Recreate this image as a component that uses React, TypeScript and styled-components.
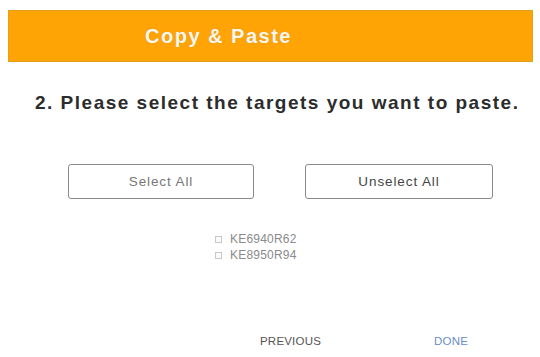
import React from "react";
import styled, { createGlobalStyle } from "styled-components";

const Global = createGlobalStyle`
  html, body { margin: 0; padding: 0; background: #ffffff; }
  body { font-family: "Liberation Sans", Arial, sans-serif; }
`;

const Page = styled.div`
  width: 540px;
  height: 357px;
  display: flex;
  flex-direction: column;
  background: #fff;
  overflow: hidden;
`;

const HeaderBar = styled.div`
  margin: 10px 7px 0 8px;
  height: 52px;
  box-sizing: border-box;
  background: #ffa404;
  border: 1px solid #e4a21c;
  display: flex;
  align-items: center;
  padding-left: 136px;
`;

const HeaderTitle = styled.span`
  color: #fbf6e8;
  font-weight: bold;
  font-size: 20px;
  letter-spacing: 1.5px;
  text-shadow: 0 0 1px #b9935a;
`;

const Instruction = styled.div`
  margin-top: 30px;
  padding-left: 35px;
  font-weight: bold;
  font-size: 19px;
  letter-spacing: 1.5px;
  color: #2c2c2c;
  line-height: 22px;
  white-space: nowrap;
`;

const ButtonRow = styled.div`
  margin-top: 50px;
  display: flex;
  gap: 51px;
  padding-left: 68px;
`;

const ActionButton = styled.button<{ $width: number; $dark?: boolean }>`
  width: ${(p) => p.$width}px;
  height: 35px;
  box-sizing: border-box;
  background: #fff;
  border: 1.5px solid #8a8a8a;
  border-radius: 3px;
  font-family: "Liberation Sans", Arial, sans-serif;
  font-size: 13.5px;
  letter-spacing: 0.9px;
  color: ${(p) => (p.$dark ? "#444" : "#777")};
  padding: 0;
`;

const TargetList = styled.div`
  margin-top: 32px;
  padding-left: 215px;
  display: flex;
  flex-direction: column;
`;

const TargetRow = styled.label`
  display: flex;
  align-items: center;
  gap: 8px;
  height: 16px;
  font-size: 12px;
  letter-spacing: 0.2px;
  color: #8a8a8a;
`;

const Box = styled.span`
  width: 7px;
  height: 7px;
  box-sizing: border-box;
  border: 1px solid #c8c8c8;
  background: #fafafa;
`;

const Footer = styled.div`
  margin-top: 72px;
  display: flex;
  padding-left: 260px;
  gap: 113px;
`;

const FooterLink = styled.span<{ $accent?: boolean }>`
  font-size: 11.5px;
  letter-spacing: 0.2px;
  color: ${(p) => (p.$accent ? "#6b8dc6" : "#555")};
`;

export default function App() {
  const targets = ["KE6940R62", "KE8950R94"];
  return (
    <>
      <Global />
      <Page>
        <HeaderBar>
          <HeaderTitle>Copy &amp; Paste</HeaderTitle>
        </HeaderBar>
        <Instruction>2. Please select the targets you want to paste.</Instruction>
        <ButtonRow>
          <ActionButton $width={186}>Select All</ActionButton>
          <ActionButton $width={188} $dark>
            Unselect All
          </ActionButton>
        </ButtonRow>
        <TargetList>
          {targets.map((t) => (
            <TargetRow key={t}>
              <Box />
              {t}
            </TargetRow>
          ))}
        </TargetList>
        <Footer>
          <FooterLink>PREVIOUS</FooterLink>
          <FooterLink $accent>DONE</FooterLink>
        </Footer>
      </Page>
    </>
  );
}
